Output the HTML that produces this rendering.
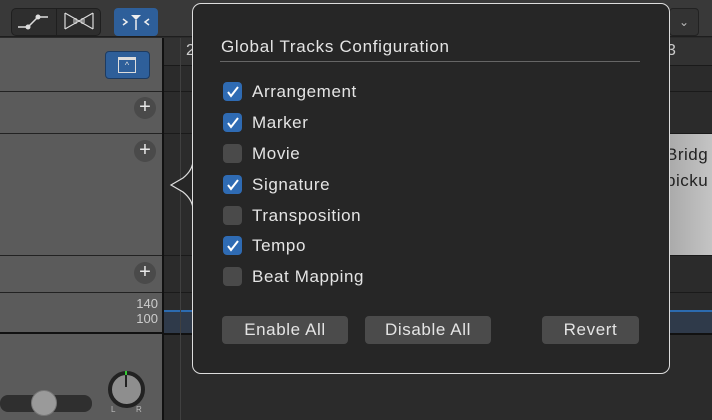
<!DOCTYPE html>
<html><head><meta charset="utf-8"><style>
*{margin:0;padding:0;box-sizing:border-box}
body{width:712px;height:420px;overflow:hidden;background:#2b2b2b;font-family:"Liberation Sans",sans-serif;position:relative}
.a{position:absolute}
.plus{position:absolute;left:134px;width:22px;height:22px;border-radius:50%;background:#4a4a4a;color:#e8e8e8;font-size:20px;line-height:21px;text-align:center}
.cb{position:absolute;left:223px;width:19px;height:19px;border-radius:4px;background:#4a4a4a}
.cb.on{background:#2f6bb3}
.cb.on svg{position:absolute;left:3px;top:3px}
.lb{position:absolute;left:252px;color:#e4e4e4;font-size:17px;line-height:20px;letter-spacing:0.6px}
.btn{position:absolute;top:316px;height:28px;background:#4b4b4b;border-radius:4px;color:#e4e4e4;font-size:17px;line-height:28px;text-align:center;letter-spacing:0.6px}
</style></head><body>
<div class="a" style="left:0;top:0;width:712px;height:37px;background:#393939;border-bottom:1px solid #1e1e1e"></div>
<div class="a" style="left:11px;top:8px;width:90px;height:28px;background:#2e2e2e;border:1px solid #1f1f1f;border-radius:5px"></div>
<div class="a" style="left:56px;top:8px;width:1px;height:28px;background:#1f1f1f"></div>
<svg class="a" style="left:14px;top:10px" width="40" height="22"><path d="M4 17H14L24 7H34" stroke="#ddd" stroke-width="1.5" fill="none"/><circle cx="14" cy="17" r="2.5" fill="#ddd"/><circle cx="24" cy="7" r="2.5" fill="#ddd"/></svg>
<svg class="a" style="left:62px;top:10px" width="34" height="22"><path d="M3 3L31 19M3 19L31 3M3 3V19M31 3V19" stroke="#ddd" stroke-width="1.2" fill="none"/><path d="M12 9v4M14 8v6M20 8v6M22 9v4" stroke="#ddd" stroke-width="1"/></svg>
<div class="a" style="left:114px;top:8px;width:44px;height:28px;background:#2e5f9a;border-radius:4px"></div>
<svg class="a" style="left:114px;top:8px" width="44" height="28"><path d="M9 11l4 3-4 3M35 11l-4 3 4 3" stroke="#eee" stroke-width="1.5" fill="none"/><path d="M17 7h10l-5 5z" fill="#eee"/><path d="M22 12v10" stroke="#eee" stroke-width="1.5"/></svg>
<div class="a" style="left:669px;top:8px;width:30px;height:28px;background:#333;border:1px solid #222;border-radius:4px;color:#bbb;font-size:12px;text-align:center;line-height:26px">&#8964;</div>
<div class="a" style="left:0;top:38px;width:162px;height:382px;background:#5b5b5b"></div>
<div class="a" style="left:162px;top:38px;width:2px;height:382px;background:#111"></div>
<div class="a" style="left:105px;top:51px;width:45px;height:28px;background:#2e5f9a;border-radius:4px;border:1px solid #1d3b61"></div>
<div class="a" style="left:118px;top:57px;width:18px;height:16px;border:1.5px solid #ddd;border-top-width:3px;color:#ddd;font-size:9px;text-align:center;line-height:10px">^</div>
<div class="a" style="left:0;top:91px;width:162px;height:1px;background:#222"></div>
<div class="a" style="left:0;top:133px;width:162px;height:1px;background:#222"></div>
<div class="a" style="left:0;top:255px;width:162px;height:1px;background:#222"></div>
<div class="a" style="left:0;top:292px;width:162px;height:1px;background:#222"></div>
<div class="a" style="left:0;top:332px;width:162px;height:2px;background:#111"></div>
<div class="plus" style="top:97px">+</div>
<div class="plus" style="top:140px">+</div>
<div class="plus" style="top:262px">+</div>
<div class="a" style="left:120px;top:296px;width:38px;color:#ccc;font-size:13px;line-height:15px;text-align:right">140<br>100</div>
<div class="a" style="left:0;top:395px;width:92px;height:17px;background:#2f2f2f;border-radius:8px"></div>
<div class="a" style="left:31px;top:390px;width:26px;height:26px;border-radius:50%;background:#9a9a9a;border:1px solid #777"></div>
<div class="a" style="left:108px;top:371px;width:37px;height:37px;border-radius:50%;border:4px solid #222;background:#8e8e8e"></div>
<div class="a" style="left:125px;top:371px;width:2px;height:16px;background:#222"></div>
<div class="a" style="left:125px;top:371px;width:2px;height:4px;background:#3c3"></div>
<div class="a" style="left:111px;top:405px;color:#bbb;font-size:8px">L</div>
<div class="a" style="left:136px;top:405px;color:#bbb;font-size:8px">R</div>
<div class="a" style="left:164px;top:38px;width:548px;height:28px;background:#323232;border-bottom:1px solid #1a1a1a"></div>
<div class="a" style="left:164px;top:91px;width:548px;height:1px;background:#1a1a1a"></div>
<div class="a" style="left:164px;top:133px;width:548px;height:1px;background:#1a1a1a"></div>
<div class="a" style="left:164px;top:255px;width:548px;height:1px;background:#1a1a1a"></div>
<div class="a" style="left:164px;top:292px;width:548px;height:1px;background:#1a1a1a"></div>
<div class="a" style="left:164px;top:310px;width:548px;height:2px;background:#2c6bb0"></div>
<div class="a" style="left:164px;top:312px;width:548px;height:21px;background:#2f3a4a"></div>
<div class="a" style="left:164px;top:333px;width:548px;height:2px;background:#111"></div>
<div class="a" style="left:180px;top:38px;width:1px;height:382px;background:#404040"></div>
<div class="a" style="left:186px;top:42px;color:#ccc;font-size:16px">2</div>
<div class="a" style="left:669px;top:134px;width:43px;height:121px;background:linear-gradient(90deg,#aaa,#c4c4c4)"></div>
<div class="a" style="left:666px;top:142px;color:#222;font-size:17px;line-height:26px;letter-spacing:0.5px">Bridg<br>picku</div>
<div class="a" style="left:667px;top:42px;color:#ccc;font-size:16px">3</div>
<svg class="a" style="left:168px;top:160px" width="30" height="50"><path d="M25 0 Q25 10 15 18 L3 25 L15 32 Q25 40 25 50" fill="#262626" stroke="#ddd" stroke-width="1.2"/></svg>
<div class="a" style="left:192px;top:3px;width:478px;height:371px;background:#262626;border:1.5px solid #ddd;border-radius:9px"></div>
<div class="a" style="left:193px;top:164px;width:3px;height:42px;background:#262626"></div>
<div class="a" style="left:221px;top:37px;color:#e4e4e4;font-size:17px;letter-spacing:0.7px">Global Tracks Configuration</div>
<div class="a" style="left:220px;top:61px;width:420px;height:1px;background:#666"></div>
<div class="cb on" style="top:82px"><svg width="13" height="13"><path d="M2 7l3 4 7-9" stroke="#fff" stroke-width="2" fill="none"/></svg></div>
<div class="lb" style="top:82px">Arrangement</div>
<div class="cb on" style="top:113px"><svg width="13" height="13"><path d="M2 7l3 4 7-9" stroke="#fff" stroke-width="2" fill="none"/></svg></div>
<div class="lb" style="top:113px">Marker</div>
<div class="cb" style="top:144px"></div>
<div class="lb" style="top:144px">Movie</div>
<div class="cb on" style="top:175px"><svg width="13" height="13"><path d="M2 7l3 4 7-9" stroke="#fff" stroke-width="2" fill="none"/></svg></div>
<div class="lb" style="top:175px">Signature</div>
<div class="cb" style="top:206px"></div>
<div class="lb" style="top:206px">Transposition</div>
<div class="cb on" style="top:236px"><svg width="13" height="13"><path d="M2 7l3 4 7-9" stroke="#fff" stroke-width="2" fill="none"/></svg></div>
<div class="lb" style="top:236px">Tempo</div>
<div class="cb" style="top:267px"></div>
<div class="lb" style="top:267px">Beat Mapping</div>
<div class="btn" style="left:222px;width:126px">Enable All</div>
<div class="btn" style="left:365px;width:126px">Disable All</div>
<div class="btn" style="left:542px;width:97px">Revert</div>
</body></html>
